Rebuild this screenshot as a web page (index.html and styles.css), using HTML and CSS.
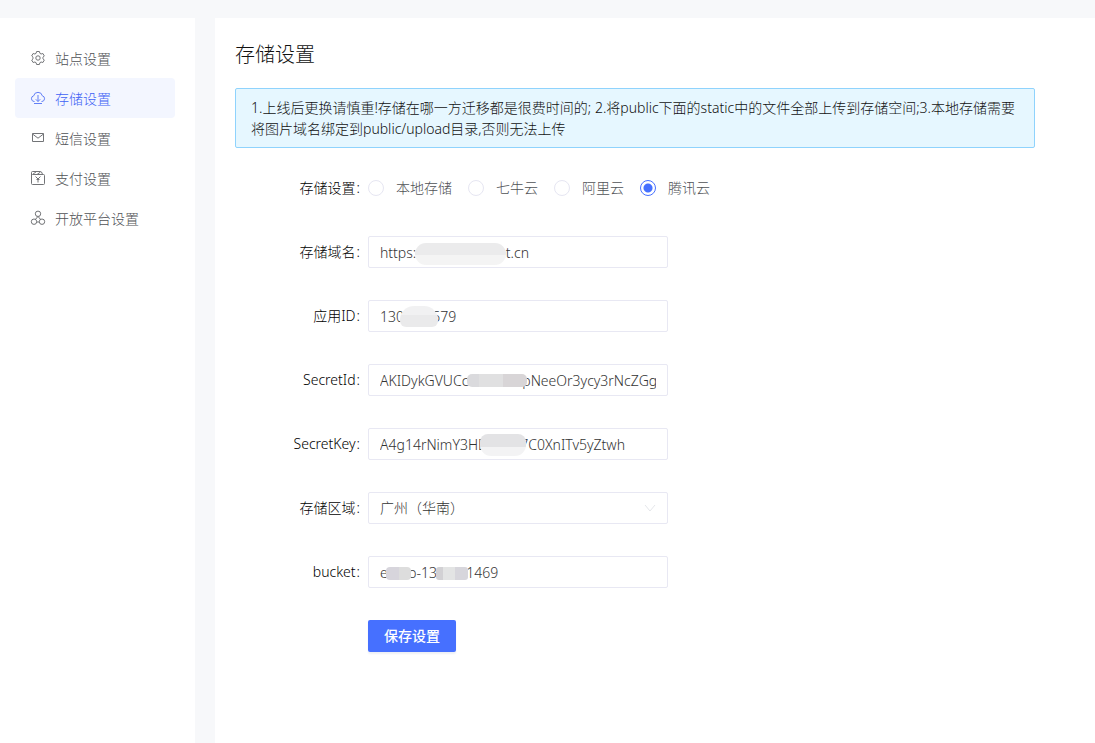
FILE: index.html
```html
<!DOCTYPE html>
<html lang="zh-CN">
<head>
<meta charset="utf-8">
<meta name="viewport" content="width=device-width, initial-scale=1">
<title>存储设置</title>
<link rel="stylesheet" href="styles.css">
</head>
<body>
<div class="layout">
  <nav class="sidebar" aria-label="设置">
    <a class="nav-item" href="#site">
      <svg class="nav-icon" viewBox="0 0 16 16" aria-hidden="true"><path d="M6.600 1.500h2.800l.5 1.800 1.200.7 1.800-.5 1.400 2.400L13 7.200v1.600l1.300 1.300-1.400 2.400-1.800-.5-1.200.7-.5 1.800H6.600l-.5-1.800-1.200-.7-1.800.5-1.400-2.400L3 8.800V7.200L1.700 5.900l1.400-2.400 1.800.5 1.200-.7z"/><circle cx="8" cy="8" r="2.200"/></svg>
      <span>站点设置</span>
    </a>
    <a class="nav-item nav-item-active" href="#storage" aria-current="page">
      <svg class="nav-icon" viewBox="0 0 16 16" aria-hidden="true"><path d="M4.500 11.500H4a2.900 2.900 0 0 1-.3-5.700 4.400 4.400 0 0 1 8.600 0 2.900 2.900 0 0 1-.3 5.700h-.5M8 5v6.500M5.800 9.300 8 11.500l2.200-2.200M4 13.500h8"/></svg>
      <span>存储设置</span>
    </a>
    <a class="nav-item" href="#sms">
      <svg class="nav-icon" viewBox="0 0 16 16" aria-hidden="true"><path d="M2.500 3.500h11v8h-11zM2.500 4l5.500 4.200L13.500 4"/></svg>
      <span>短信设置</span>
    </a>
    <a class="nav-item" href="#payment">
      <svg class="nav-icon" viewBox="0 0 16 16" aria-hidden="true"><path d="M2.500 4.500h11q1 0 1 1v8q0 1-1 1h-11q-1 0-1-1v-11q0-1 1-1h8q1 0 1.500 1.500l.5 1.500M2.500 4.500l4-3M7 4.500l3.500-2.500M5.500 6.500 8 9l2.500-2.500M8 9v3.500M6.500 9.500h3"/></svg>
      <span>支付设置</span>
    </a>
    <a class="nav-item" href="#platform">
      <svg class="nav-icon" viewBox="0 0 16 16" aria-hidden="true"><circle cx="8" cy="3.800" r="2.700"/><circle cx="4" cy="11.700" r="2.700"/><circle cx="12" cy="11.700" r="2.700"/><path d="M7.200 6.500v1.200l-2 1.600M8.800 6.500v1.200l2 1.600M6.700 12h2.600"/></svg>
      <span>开放平台设置</span>
    </a>
  </nav>
  <main class="panel">
    <h1 class="title">存储设置</h1>
    <p class="notice">1.上线后更换请慎重!存储在哪一方迁移都是很费时间的; 2.将public下面的static中的文件全部上传到存储空间;3.本地存储需要将图片域名绑定到public/upload目录,否则无法上传</p>
    <form class="form">
      <div class="row" role="radiogroup" aria-labelledby="storage-label">
        <span class="label" id="storage-label">存储设置</span>
        <div class="radios">
          <label class="radio"><input type="radio" name="storage"><span>本地存储</span></label>
          <label class="radio"><input type="radio" name="storage"><span>七牛云</span></label>
          <label class="radio"><input type="radio" name="storage"><span>阿里云</span></label>
          <label class="radio"><input type="radio" name="storage" checked><span>腾讯云</span></label>
        </div>
      </div>
      <div class="row">
        <label class="label" for="domain">存储域名</label>
        <div class="field"><input class="control" id="domain" type="text" value="https://xxxxxxxxoeet.cn"><span class="mask mask-domain"></span></div>
      </div>
      <div class="row">
        <label class="label" for="appid">应用ID</label>
        <div class="field"><input class="control" id="appid" type="text" value="130xxxx579"><span class="mask mask-appid"></span></div>
      </div>
      <div class="row">
        <label class="label" for="secret-id">SecretId</label>
        <div class="field"><input class="control" id="secret-id" type="text" value="AKIDykGVUCcxxxoooopNeeOr3ycy3rNcZGg"><span class="mask mask-secret-id"></span></div>
      </div>
      <div class="row">
        <label class="label" for="secret-key">SecretKey</label>
        <div class="field"><input class="control" id="secret-key" type="text" value="A4g14rNimY3HDxxxrr7C0XnITv5yZtwh"><span class="mask mask-secret-key"></span></div>
      </div>
      <div class="row">
        <label class="label" for="region">存储区域</label>
        <div class="field">
          <select class="control select" id="region"><option>广州（华南）</option></select>
          <svg class="chevron" viewBox="0 0 12 12" aria-hidden="true"><path d="M1 3l5 6 5-6"/></svg>
        </div>
      </div>
      <div class="row">
        <label class="label" for="bucket">bucket</label>
        <div class="field"><input class="control" id="bucket" type="text" value="exxxo-130xxx1469"><span class="mask mask-bucket-name"></span><span class="mask mask-bucket-id"></span></div>
      </div>
      <div class="actions"><button class="save" type="button">保存设置</button></div>
    </form>
  </main>
</div>
</body>
</html>
```

FILE: styles.css
```css
* {
  box-sizing: border-box;
}

body {
  margin: 0;
  background: #f7f8fa;
  color: #111;
  font: 300 14px/22px "Noto Sans", "Noto Sans CJK SC", sans-serif;
}

.layout {
  display: flex;
  gap: 20px;
  min-height: 100vh;
  padding-top: 18px;
}

.sidebar {
  flex: 0 0 195px;
  padding: 20px 20px 20px 15px;
  background: #fff;
}

.nav-item {
  display: flex;
  align-items: center;
  gap: 9px;
  height: 40px;
  padding: 0 15px;
  border-radius: 4px;
  color: #505256;
  line-height: 24px;
  text-decoration: none;
}

.nav-item span {
  padding-top: 2px;
}

.nav-item-active {
  background: #f3f6ff;
  color: #3f62f5;
}

.nav-icon {
  width: 16px;
  height: 16px;
  fill: none;
  stroke: currentColor;
  stroke-width: 1;
  opacity: 0.8;
}

.panel {
  flex: 1;
  min-width: 0;
  padding: 20px;
  background: #fff;
}

.title {
  margin: 0;
  font-size: 20px;
  font-weight: 300;
  line-height: 34px;
}

.notice {
  max-width: 800px;
  margin: 16px 0 24px;
  padding: 8px 15px;
  border: 1px solid #8fd3fd;
  border-radius: 2px;
  background: #e6f7ff;
  line-height: 21px;
}

.form {
  display: grid;
  gap: 32px;
  max-width: 800px;
}

.row {
  display: grid;
  grid-template-columns: 125px minmax(0, 1fr);
  gap: 8px;
  align-items: center;
  min-height: 32px;
}

.label {
  color: #000;
  text-align: right;
}

.label::after {
  content: ":";
  margin-left: 1px;
}

.radios {
  display: flex;
  gap: 16px;
  color: #505256;
}

.radio {
  display: flex;
  align-items: center;
  gap: 12px;
}

.radio input {
  appearance: none;
  width: 16px;
  height: 16px;
  margin: 0;
  border: 1px solid #e6e6f2;
  border-radius: 50%;
  background: #fff;
}

.radio input:checked {
  border-color: #4670ff;
  background: radial-gradient(circle, #4670ff 4px, #fff 5px);
}

.field {
  position: relative;
  max-width: 300px;
}

.control {
  display: block;
  width: 100%;
  height: 32px;
  padding: 0 11px;
  border: 1px solid #e8e8f3;
  border-radius: 2px;
  background: #fff;
  color: #333;
  font: inherit;
}

.select {
  appearance: none;
}

.chevron {
  position: absolute;
  top: 10px;
  right: 12px;
  width: 12px;
  height: 12px;
  fill: none;
  stroke: #e4e6ea;
  pointer-events: none;
}

.mask {
  position: absolute;
  pointer-events: none;
}

.mask-domain {
  top: 7px;
  left: 47px;
  width: 91px;
  height: 22px;
  border-radius: 11px;
  background: linear-gradient(#ebebec 12px, #f4f4f4 12px);
}

.mask-appid {
  top: 6px;
  left: 32px;
  width: 38px;
  height: 21px;
  border-radius: 14px 14px 6px 6px;
  background: linear-gradient(#f1f1f2 9px, #eaeaeb 9px);
}

.mask-secret-id {
  top: 10px;
  left: 99px;
  width: 60px;
  height: 13px;
  border-radius: 5px;
  background: linear-gradient(90deg, #dadadd 12px, #e0e0e1 12px 36px, #d8d5d7 36px);
}

.mask-secret-key {
  top: 6px;
  left: 112px;
  width: 46px;
  height: 22px;
  border-radius: 8px 8px 11px 11px;
  background: linear-gradient(#e3e3e5 13px, #f3f3f4 13px);
}

.mask-bucket-name {
  top: 11px;
  left: 18px;
  width: 25px;
  height: 13px;
  border-radius: 4px;
  background: linear-gradient(90deg, #d7d5dc 13px, #dddddd 13px);
}

.mask-bucket-id {
  top: 11px;
  left: 68px;
  width: 32px;
  height: 13px;
  border-radius: 3px;
  background: linear-gradient(90deg, #d2d1d4 7px, #e3e4e4 7px 19px, #d7d6dc 19px);
}

.actions {
  padding-left: 133px;
}

.save {
  height: 32px;
  padding: 0 16px;
  border: 0;
  border-radius: 2px;
  background: #4670ff;
  box-shadow: 0 2px 2px #eef0f5;
  color: #fff;
  font: inherit;
  font-weight: 500;
}
```
